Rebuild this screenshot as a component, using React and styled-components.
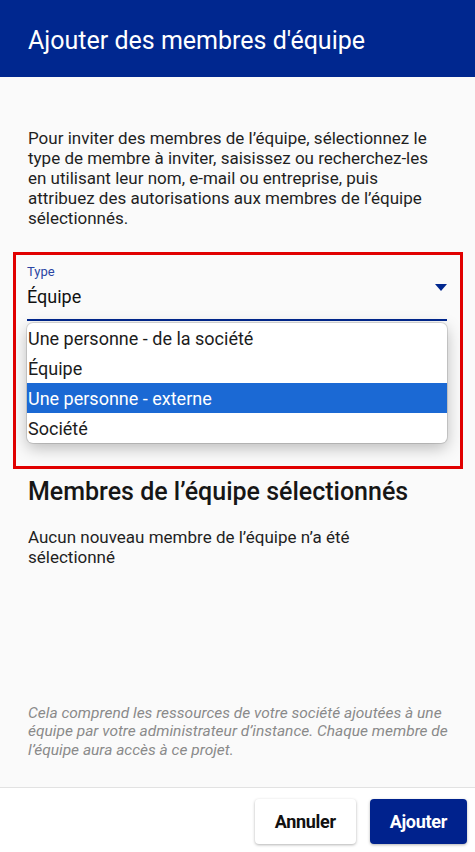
import React, { useState } from "react";
import styled, { createGlobalStyle } from "styled-components";

const GlobalStyle = createGlobalStyle`
  html, body {
    margin: 0;
    padding: 0;
    background: #fafafa;
  }
  body {
    font-family: Roboto, "Liberation Sans", Arial, sans-serif;
    color: #222;
  }
  * {
    box-sizing: border-box;
  }
`;

const Page = styled.div`
  width: 475px;
  height: 852px;
  display: flex;
  flex-direction: column;
  background: #fafafa;
  overflow: hidden;
`;

const Header = styled.header`
  height: 77px;
  flex-shrink: 0;
  background: #00278f;
  display: flex;
  align-items: center;
  padding: 3px 28px 0;
`;

const Title = styled.h1`
  margin: 0;
  font-size: 25px;
  font-weight: 400;
  color: #fff;
`;

const Content = styled.main`
  flex: 1;
  display: flex;
  flex-direction: column;
  padding: 51px 28px 0;
`;

const Intro = styled.p`
  margin: 0;
  font-size: 17px;
  line-height: 20px;
  color: #1f1f1f;
`;

const Highlight = styled.div`
  position: relative;
  height: 217px;
  margin: 24px -16px 0 -15px;
  padding: 9px 13px 0 11px;
  border: 3px solid #e10000;
`;

const Field = styled.div`
  position: relative;
  padding-bottom: 10px;
  border-bottom: 2px solid #00278f;
`;

const Label = styled.div`
  font-size: 13px;
  line-height: 16px;
  color: #2b45a3;
`;

const Value = styled.div`
  margin-top: 5px;
  font-size: 18px;
  line-height: 24px;
  color: #111;
`;

const Caret = styled.svg`
  position: absolute;
  right: 0;
  top: 20px;
`;

const Menu = styled.ul`
  position: absolute;
  left: 11px;
  right: 13px;
  top: 68px;
  margin: 0;
  padding: 0;
  list-style: none;
  background: #fff;
  border-radius: 6px;
  overflow: hidden;
  box-shadow: 0 5px 16px rgba(0, 0, 0, 0.26), 0 0 0 1px rgba(0, 0, 0, 0.12);
`;

const Option = styled.li`
  height: 30px;
  display: flex;
  align-items: center;
  padding: 0 1px;
  font-size: 18px;
  color: ${(p) => (p.$active ? "#fff" : "#1c1c1c")};
  background: ${(p) => (p.$active ? "#1b69d4" : "transparent")};
`;

const SectionTitle = styled.h2`
  margin: 8px 0 0;
  font-size: 25px;
  line-height: 30px;
  font-weight: 500;
  color: #161616;
`;

const Empty = styled.p`
  margin: 21px 0 0;
  font-size: 17px;
  line-height: 19.5px;
  color: #1f1f1f;
`;

const Note = styled.p`
  margin: auto -2px 28px 0;
  font-size: 15.5px;
  line-height: 18.5px;
  font-style: italic;
  color: #8a8a8a;
`;

const Footer = styled.footer`
  height: 65px;
  flex-shrink: 0;
  border-top: 1px solid #e2e2e2;
  background: #fff;
  display: flex;
  justify-content: flex-end;
  align-items: flex-start;
  gap: 14px;
  padding: 11px 8px 0;
`;

const Button = styled.button`
  height: 45px;
  padding: 0 20px;
  border: none;
  border-radius: 4px;
  font-family: Roboto, "Liberation Sans", Arial, sans-serif;
  font-size: 18px;
  font-weight: 700;
  letter-spacing: -0.3px;
  color: ${(p) => (p.$primary ? "#fff" : "#111")};
  background: ${(p) => (p.$primary ? "#00228d" : "#fff")};
  box-shadow: 0 1px 3px rgba(0, 0, 0, 0.3);
`;

const options = [
  "Une personne - de la société",
  "Équipe",
  "Une personne - externe",
  "Société",
];

export default function App() {
  const [active] = useState(2);

  return (
    <Page>
      <GlobalStyle />
      <Header>
        <Title>Ajouter des membres d'équipe</Title>
      </Header>
      <Content>
        <Intro>
          Pour inviter des membres de l’équipe, sélectionnez le type de membre
          à inviter, saisissez ou recherchez-les en utilisant leur nom, e-mail
          ou entreprise, puis attribuez des autorisations aux membres de
          l’équipe sélectionnés.
        </Intro>
        <Highlight>
          <Field>
            <Label>Type</Label>
            <Value>Équipe</Value>
            <Caret width="12" height="7" viewBox="0 0 12 7">
              <path d="M0 0h12L6 7z" fill="#00278f" />
            </Caret>
          </Field>
          <Menu>
            {options.map((opt, i) => (
              <Option key={opt} $active={i === active}>
                {opt}
              </Option>
            ))}
          </Menu>
        </Highlight>
        <SectionTitle>Membres de l’équipe sélectionnés</SectionTitle>
        <Empty>
          Aucun nouveau membre de l’équipe n’a été
          <br />
          sélectionné
        </Empty>
        <Note>
          Cela comprend les ressources de votre société ajoutées à une
          <br />
          équipe par votre administrateur d’instance. Chaque membre de
          <br />
          l’équipe aura accès à ce projet.
        </Note>
      </Content>
      <Footer>
        <Button>Annuler</Button>
        <Button $primary>Ajouter</Button>
      </Footer>
    </Page>
  );
}
